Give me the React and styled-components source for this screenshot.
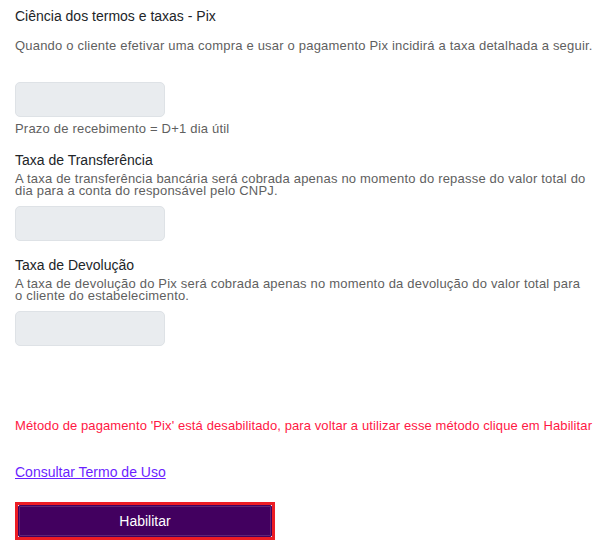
import styled, { createGlobalStyle } from "styled-components";

const GlobalStyle = createGlobalStyle`
    body {
        margin: 0;
        background: #ffffff;
        font-family: "Liberation Sans", Arial, sans-serif;
    }
`;

const Page = styled.div`
    width: 609px;
    box-sizing: border-box;
    padding: 6px 14px 0 15px;
    display: flex;
    flex-direction: column;
`;

const Title = styled.h3`
    margin: 0;
    font-size: 14px;
    line-height: 20px;
    font-weight: 400;
    color: #212529;
    margin-top: ${(p) => p.$top || 0}px;
`;

const Text = styled.p`
    margin: 0;
    font-size: 13px;
    line-height: 12px;
    letter-spacing: 0.2px;
    color: #5f5f5f;
    margin-top: ${(p) => p.$top || 0}px;
    max-width: ${(p) => (p.$maxWidth ? `${p.$maxWidth}px` : "none")};
`;

const FeeBox = styled.div`
    width: 150px;
    height: 35px;
    box-sizing: border-box;
    background: #e9ecef;
    border: 1px solid #dee2e6;
    border-radius: 5px;
    margin-top: ${(p) => p.$top || 0}px;
`;

const Warning = styled.p`
    margin: 72px 0 0;
    font-size: 13px;
    line-height: 16px;
    letter-spacing: 0.1px;
    white-space: nowrap;
    color: #ff1744;
`;

const TermsLink = styled.a`
    align-self: flex-start;
    margin-top: 29px;
    font-size: 14px;
    line-height: 18px;
    color: #6b1fff;
    text-decoration: underline;
    cursor: pointer;
`;

const ButtonFrame = styled.div`
    align-self: flex-start;
    margin-top: 21px;
    width: 260px;
    height: 38px;
    box-sizing: border-box;
    border: 3px solid #ec1c24;
    display: flex;
`;

const EnableButton = styled.button`
    flex: 1;
    border: 1px solid #42005f;
    border-radius: 2px;
    box-shadow: inset 0 0 0 1px rgba(255, 255, 255, 0.15);
    background: #42005f;
    color: #ffffff;
    font-family: inherit;
    font-size: 14px;
    cursor: pointer;
`;

export default function App() {
    return (
        <>
            <GlobalStyle />
            <Page>
                <Title>Ciência dos termos e taxas - Pix</Title>
                <Text $top={14}>
                    Quando o cliente efetivar uma compra e usar o pagamento Pix incidirá a taxa detalhada a seguir.
                </Text>
                <FeeBox $top={30} />
                <Text $top={6}>Prazo de recebimento = D+1 dia útil</Text>

                <Title $top={15}>Taxa de Transferência</Title>
                <Text $top={3}>
                    A taxa de transferência bancária será cobrada apenas no momento do repasse do valor total do dia para a conta do responsável pelo CNPJ.
                </Text>
                <FeeBox $top={9} />

                <Title $top={14}>Taxa de Devolução</Title>
                <Text $top={3} $maxWidth={574}>
                    A taxa de devolução do Pix será cobrada apenas no momento da devolução do valor total  para o cliente do estabelecimento.
                </Text>
                <FeeBox $top={9} />

                <Warning>
                    Método de pagamento 'Pix' está desabilitado, para voltar a utilizar esse método clique em Habilitar
                </Warning>
                <TermsLink>Consultar Termo de Uso</TermsLink>
                <ButtonFrame>
                    <EnableButton>Habilitar</EnableButton>
                </ButtonFrame>
            </Page>
        </>
    );
}
